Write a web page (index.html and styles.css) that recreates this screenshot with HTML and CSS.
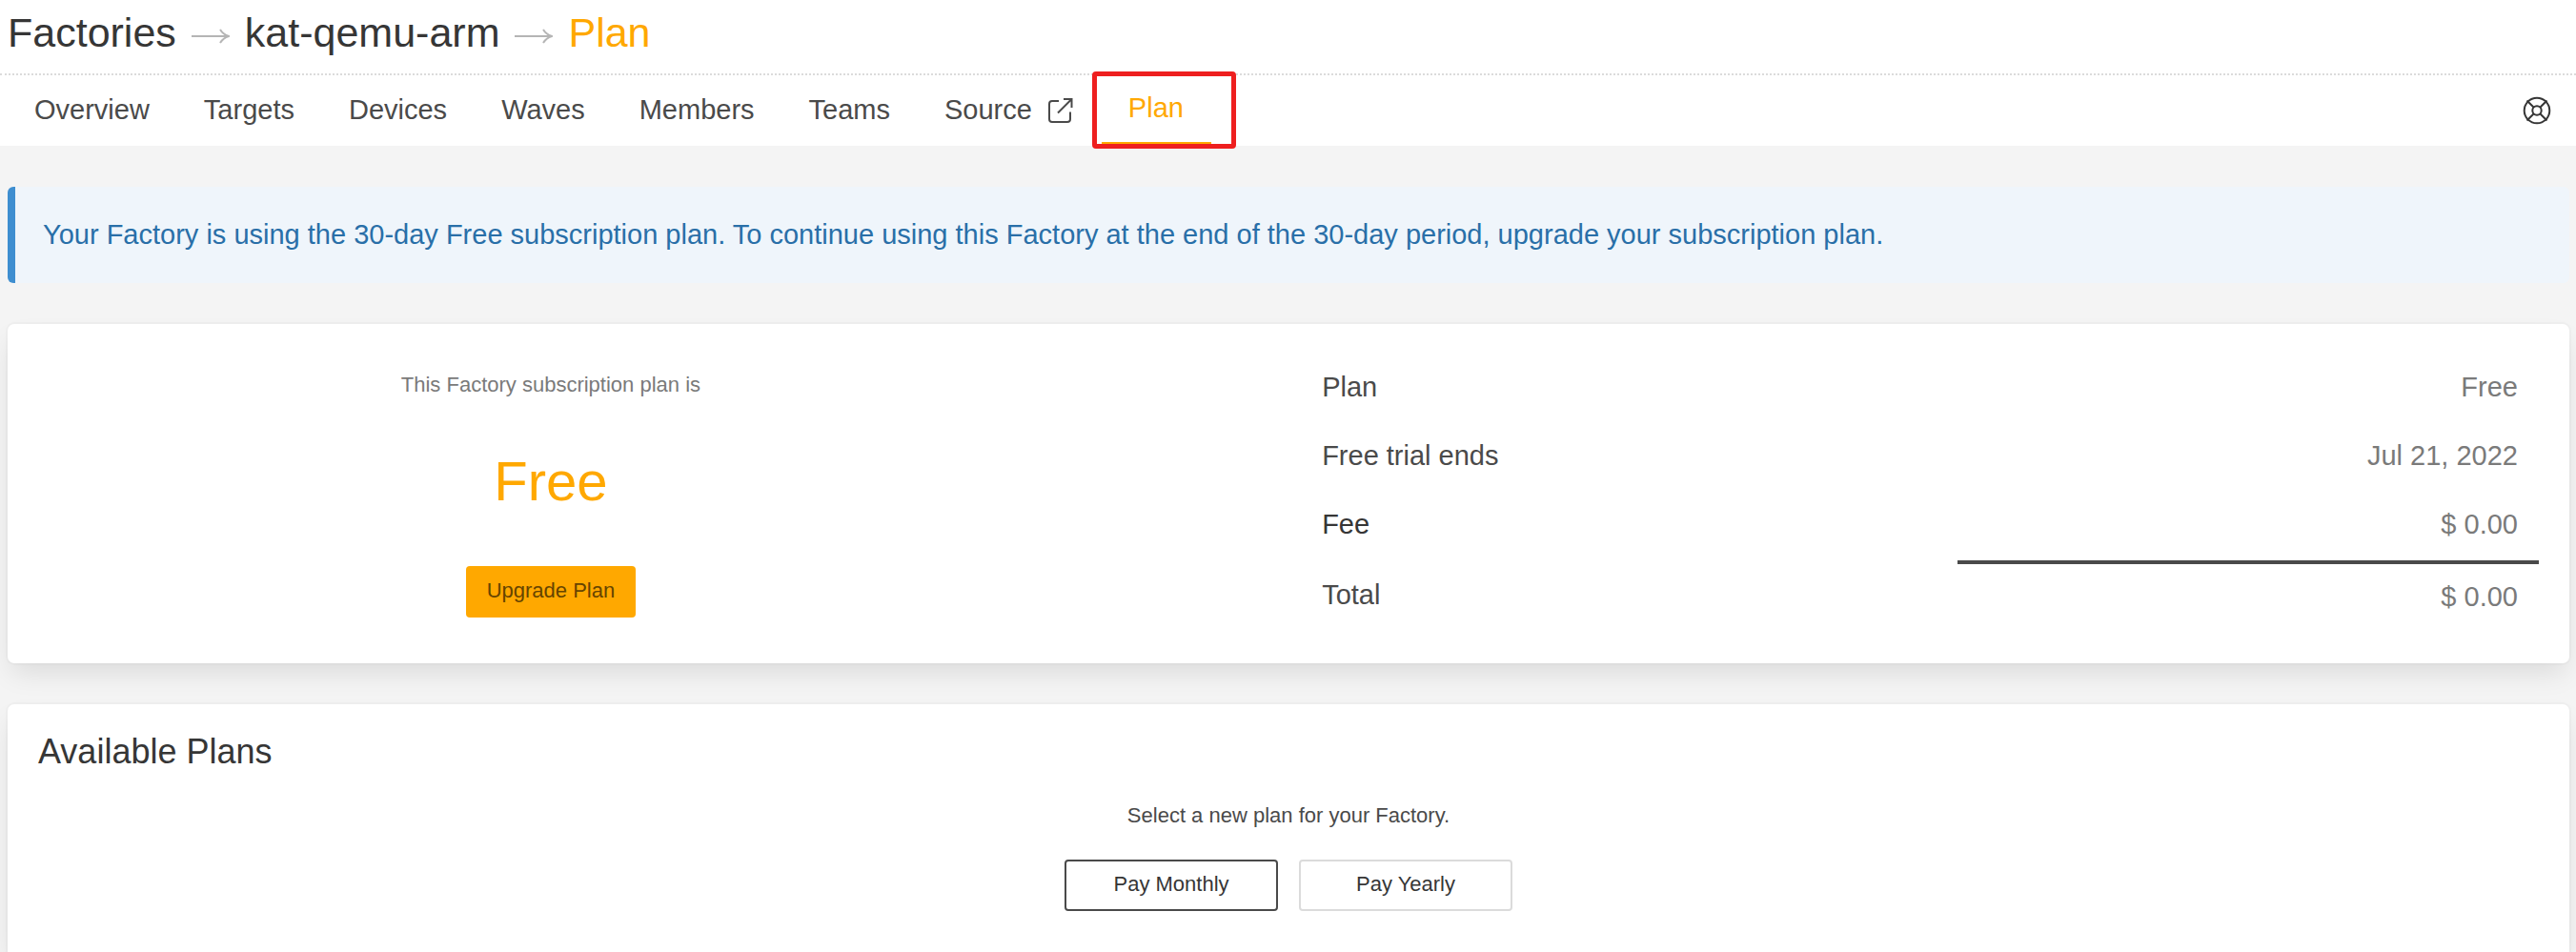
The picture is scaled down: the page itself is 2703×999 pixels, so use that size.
FILE: index.html
```html
<!DOCTYPE html>
<html lang="en">
<head>
<meta charset="utf-8">
<title>Plan - kat-qemu-arm</title>
<link rel="stylesheet" href="styles.css">
</head>
<body>
<header class="header">
  <nav class="breadcrumb" aria-label="Breadcrumb">
    <a href="#">Factories</a>
    <svg class="arrow" viewBox="0 0 40 16" aria-hidden="true"><path d="M0 8H38M30 1Q33 6 39 8Q33 10 30 15"/></svg>
    <a href="#">kat-qemu-arm</a>
    <svg class="arrow" viewBox="0 0 40 16" aria-hidden="true"><path d="M0 8H38M30 1Q33 6 39 8Q33 10 30 15"/></svg>
    <a href="#" class="current" aria-current="page">Plan</a>
  </nav>
  <nav class="tabs" aria-label="Factory">
    <a class="tab" href="#">Overview</a>
    <a class="tab" href="#">Targets</a>
    <a class="tab" href="#">Devices</a>
    <a class="tab" href="#">Waves</a>
    <a class="tab" href="#">Members</a>
    <a class="tab" href="#">Teams</a>
    <a class="tab" href="#">Source
      <svg class="external" viewBox="0 0 27 27" aria-hidden="true"><path d="M11 4H4Q1 4 1 7V23Q1 26 4 26H20Q23 26 23 23V15.500M10 16.500L24.500 2M16 2H24.500V11"/></svg>
    </a>
    <a class="tab active" href="#">Plan</a>
    <a class="help" href="#" aria-label="Help">
      <svg viewBox="0 0 30 30" aria-hidden="true"><circle cx="15" cy="15" r="13.300"/><circle cx="15" cy="15" r="4.700"/><path d="M4.500 4.500L11.500 11.500M18.500 11.500L25.500 4.500M4.500 25.500L11.500 18.500M18.500 18.500L25.500 25.500"/></svg>
    </a>
  </nav>
</header>
<main class="main">
  <p class="notice">Your Factory is using the 30-day Free subscription plan. To continue using this Factory at the end of the 30-day period, upgrade your subscription plan.</p>
  <section class="card summary">
    <div class="subscription">
      <p class="subscription-label">This Factory subscription plan is</p>
      <p class="subscription-name">Free</p>
      <button class="button primary" type="button">Upgrade Plan</button>
    </div>
    <table class="costs">
      <tr><th scope="row">Plan</th><td>Free</td></tr>
      <tr><th scope="row">Free trial ends</th><td>Jul 21, 2022</td></tr>
      <tr><th scope="row" class="strong">Fee</th><td>$ 0.00</td></tr>
      <tr><th scope="row">Total</th><td class="total">$ 0.00</td></tr>
    </table>
  </section>
  <section class="card plans">
    <h2 class="plans-title">Available Plans</h2>
    <p class="plans-hint">Select a new plan for your Factory.</p>
    <div class="periods">
      <button class="button period selected" type="button">Pay Monthly</button>
      <button class="button period" type="button">Pay Yearly</button>
    </div>
  </section>
</main>
</body>
</html>
```
FILE: styles.css
```css
* {
  box-sizing: border-box;
}

body {
  margin: 0;
  min-height: 100vh;
  display: flex;
  flex-direction: column;
  background: #f4f4f4;
  color: #4a4a4a;
  font: 29px/28px "Liberation Sans", Arial, sans-serif;
}

h2, p {
  margin: 0;
  font-weight: 400;
}

a {
  color: inherit;
  text-decoration: none;
}

.header {
  background: #fff;
}

.breadcrumb {
  display: flex;
  align-items: center;
  gap: 16px;
  padding: 12px 8px 21px;
  font-size: 43px;
  line-height: 44px;
  color: #363636;
}

.breadcrumb .current {
  color: #ffa800;
}

.arrow {
  width: 40px;
  height: 16px;
  margin-top: 8px;
  fill: none;
  stroke: #b5b5b5;
  stroke-width: 2;
}

.tabs {
  display: flex;
  height: 76px;
  padding: 0 26px 0 8px;
  border-top: 2px dotted #dbdbdb;
}

.tab {
  position: relative;
  display: flex;
  align-items: center;
  gap: 17px;
  padding: 0 29px 2px 28px;
}

.tab.active {
  color: #ffa800;
  border-bottom: 4px solid #ffa800;
}

/* Highlight frame over the current tab */
.tab.active::after {
  content: "";
  position: absolute;
  inset: -4px -26px -7px -10px;
  border: 5px solid #ee1f1f;
  border-radius: 4px;
}

.external {
  width: 27px;
  height: 27px;
  fill: none;
  stroke: #4a4a4a;
  stroke-width: 2;
}

.help {
  display: flex;
  align-items: center;
  margin-left: auto;
}

.help svg {
  width: 30px;
  height: 30px;
  fill: none;
  stroke: #363636;
  stroke-width: 2;
}

.main {
  flex: 1;
  display: flex;
  flex-direction: column;
  gap: 43px;
  padding: 43px 7px 0 8px;
}

.notice {
  padding: 36px 29px 37px;
  border-left: 8px solid #3e8ed0;
  border-radius: 6px;
  background: #eff5fb;
  color: #296fa8;
}

.card {
  background: #fff;
  border-radius: 7px;
  box-shadow: 0 14px 28px -4px rgba(10, 10, 10, 0.1), 0 0 0 2px rgba(10, 10, 10, 0.02);
}

.summary {
  display: flex;
  justify-content: space-between;
  padding: 32px;
}

.subscription {
  width: 41%;
  display: flex;
  flex-direction: column;
  align-items: center;
  gap: 56px;
  padding-top: 20px;
}

.subscription-label {
  font-size: 22px;
  line-height: 24px;
  color: #7a7a7a;
}

.subscription-name {
  font-size: 58px;
  line-height: 66px;
  color: #ffa800;
}

.button {
  height: 54px;
  padding: 0 22px 3px;
  border: 0;
  border-radius: 4px;
  background: #fff;
  color: #363636;
  font-family: inherit;
  font-size: 22px;
  line-height: 24px;
}

.button.primary {
  background: #ffa800;
  color: #664400;
}

.costs {
  width: 49.5%;
  border-collapse: separate;
  border-spacing: 0;
}

.costs th,
.costs td {
  padding: 20px 22px 24px;
  vertical-align: middle;
}

.costs th {
  text-align: left;
  font-weight: 400;
}

.costs th.strong {
  color: #363636;
}

.costs td {
  width: 47%;
  text-align: right;
  color: #7a7a7a;
}

.costs td.total {
  border-top: 4px solid #4a4a4a;
}

.plans {
  flex: 1;
  padding: 28px 32px;
  border-radius: 7px 7px 0 0;
}

.plans-title {
  font-size: 36px;
  line-height: 44px;
  color: #363636;
}

.plans-hint {
  margin: 31px 0 32px;
  text-align: center;
  font-size: 22px;
  line-height: 28px;
}

.periods {
  display: flex;
  justify-content: center;
  gap: 22px;
}

.button.period {
  width: 224px;
  border: 2px solid #dbdbdb;
}

.button.period.selected {
  border-color: #4a4a4a;
}
```
